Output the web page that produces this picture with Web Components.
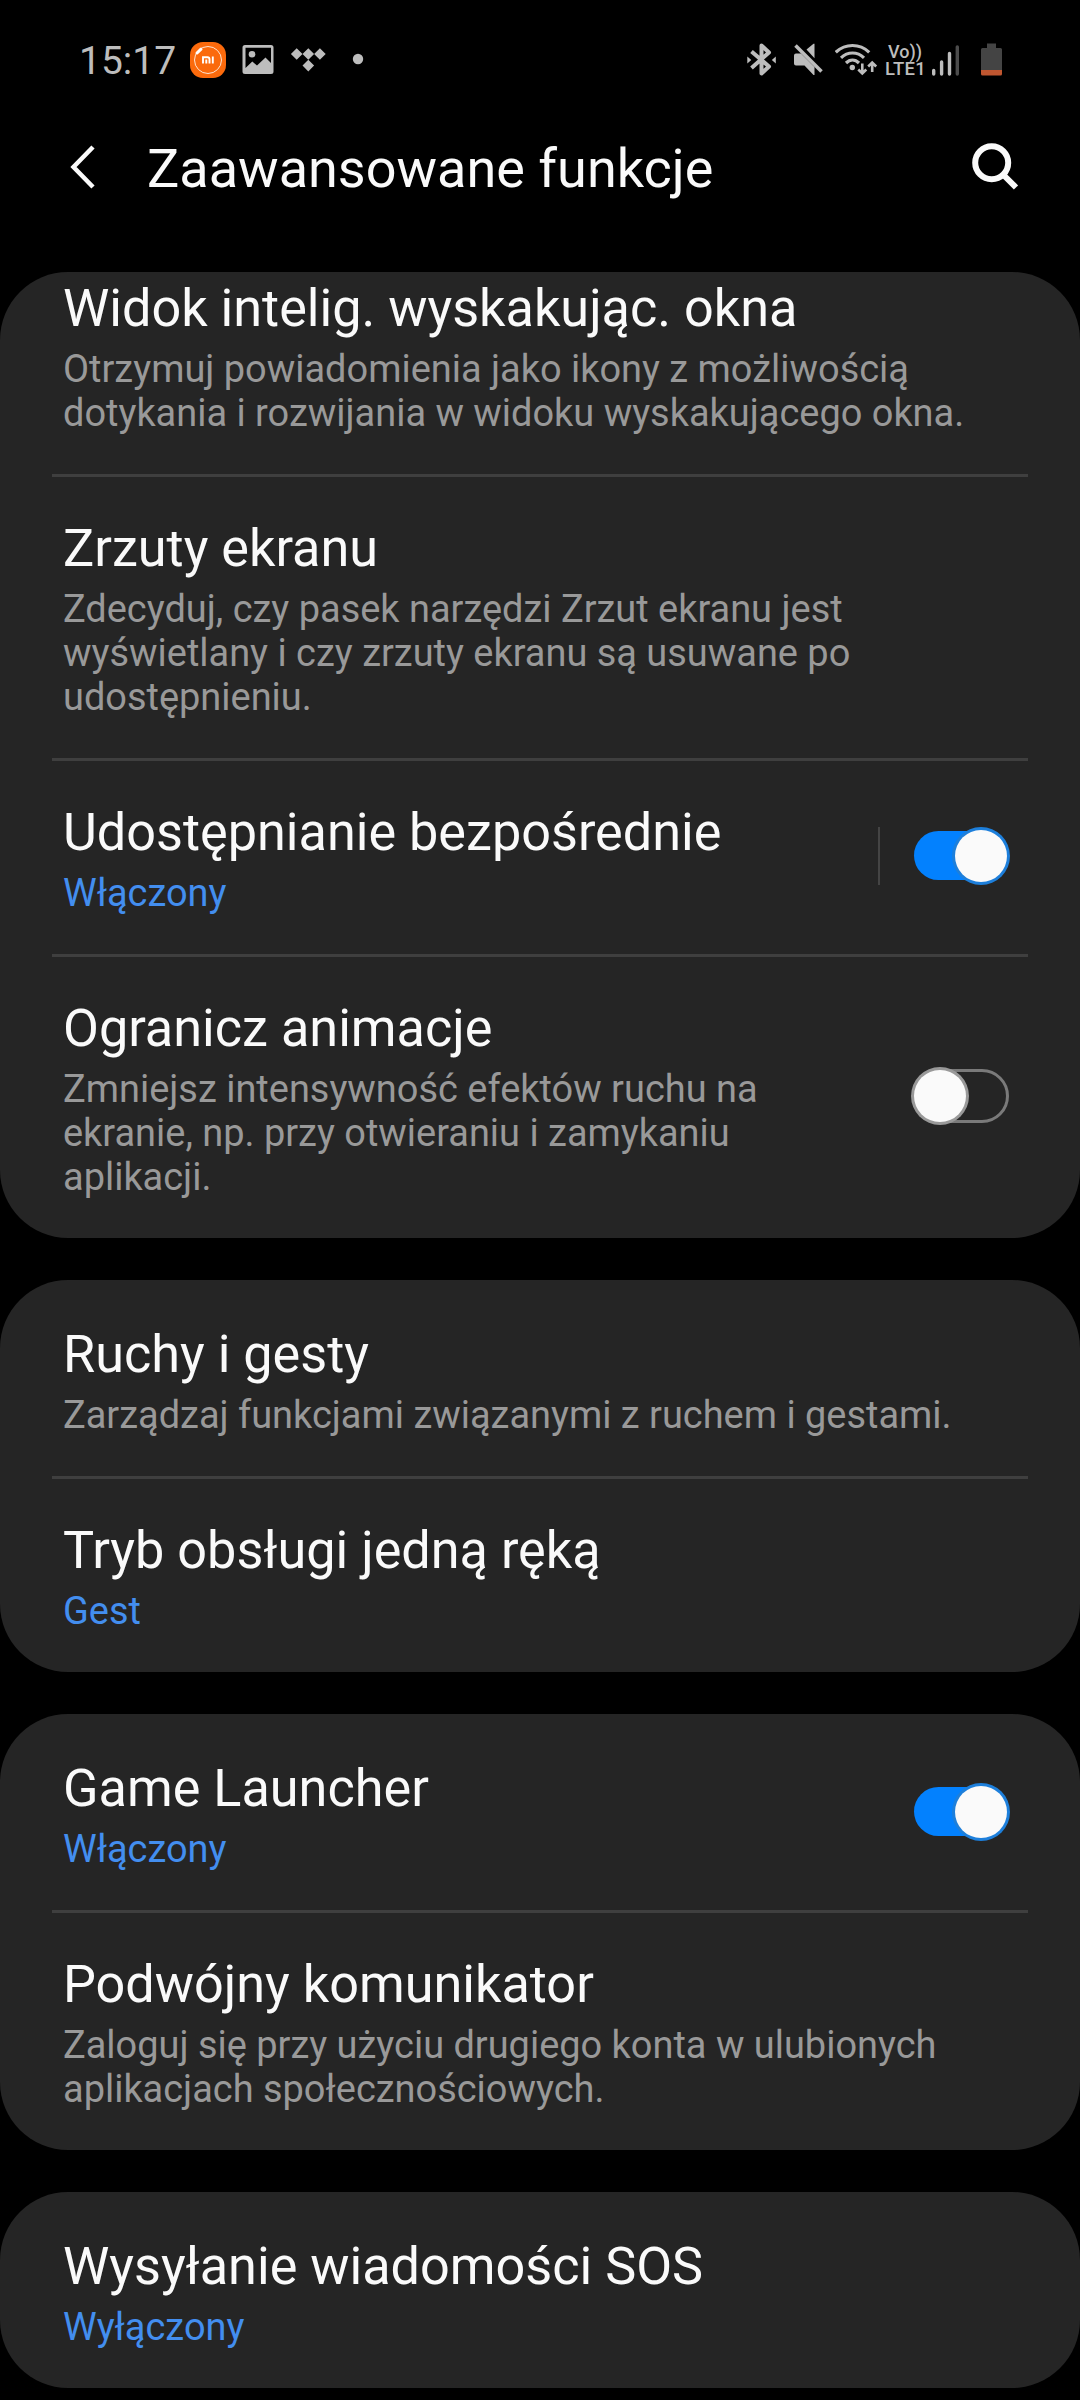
<!DOCTYPE html>
<html lang="pl">
<head>
<meta charset="utf-8">
<title>Zaawansowane funkcje</title>
<style>
    body {
        margin: 0;
        width: 1080px;
        height: 2400px;
        overflow: hidden;
        background: #000;
        color: #fafafa;
        font-family: Roboto, "Noto Sans", sans-serif;
    }
</style>
</head>
<body>

<template id="statusBarTemplate">
    <style>
        :host {
            display: flex;
            justify-content: space-between;
            box-sizing: border-box;
            height: 120px;
            padding: 40px 78px 0 79px;
            color: #bdbdbd;
        }
        .side {
            display: flex;
            height: 40px;
        }
        .time {
            width: 111px;
            font-size: 39px;
            line-height: 43px;
            white-space: nowrap;
        }
        .volte {
            display: flex;
            flex-direction: column;
            width: 47px;
            font-weight: 500;
            white-space: nowrap;
        }
        .vo {
            height: 20px;
            padding: 1px 0 0 3px;
            box-sizing: border-box;
            font-size: 18px;
            line-height: 22px;
        }
        .lte {
            font-size: 18.5px;
            line-height: 18px;
            letter-spacing: 0.3px;
        }
    </style>
    <div class="side">
        <div class="time">15:17</div>
        <ui-icon name="mi"></ui-icon>
        <ui-icon name="image"></ui-icon>
        <ui-icon name="tidal"></ui-icon>
        <ui-icon name="dot"></ui-icon>
    </div>
    <div class="side">
        <ui-icon name="bluetooth"></ui-icon>
        <ui-icon name="mute"></ui-icon>
        <ui-icon name="wifi"></ui-icon>
        <div class="volte"><span class="vo">Vo))</span><span class="lte">LTE1</span></div>
        <ui-icon name="signal"></ui-icon>
        <ui-icon name="battery"></ui-icon>
    </div>
</template>

<template id="appBarTemplate">
    <style>
        :host {
            display: flex;
            align-items: flex-start;
            box-sizing: border-box;
            height: 152px;
            padding: 20px 60px 0 67px;
        }
        .title {
            flex: 1;
            padding-left: 46px;
            font-size: 54px;
            line-height: 64px;
            margin-top: -3px;
            white-space: nowrap;
        }
    </style>
    <ui-icon name="back"></ui-icon>
    <div class="title"><slot></slot></div>
    <ui-icon name="search"></ui-icon>
</template>

<template id="settingsListTemplate">
    <style>
        :host {
            display: flex;
            flex-direction: column;
            gap: 42px;
            height: 2128px;
            overflow: hidden;
            border-radius: 68px 68px 0 0;
        }
        /* the list is scrolled a little way under the app bar */
        ::slotted(:first-child) {
            margin-top: -38px;
        }
    </style>
    <slot></slot>
</template>

<template id="settingsCardTemplate">
    <style>
        :host {
            display: block;
            flex: none;
            border-radius: 68px;
            background: #252525;
        }
    </style>
    <slot></slot>
</template>

<template id="settingsRowTemplate">
    <style>
        :host {
            display: block;
        }
        .divider {
            height: 3px;
            margin: 0 52px;
            background: #3f3f3f;
        }
        :host(:first-child) .divider {
            background: none;
        }
        .row {
            display: flex;
            justify-content: space-between;
            align-items: center;
            padding: 0 70px 0 63px;
        }
        .text {
            padding: 41px 0 39px;
            white-space: nowrap;
        }
        .title {
            font-size: 52.2px;
            line-height: 61px;
        }
        .summary {
            margin-top: 8px;
            font-size: 37.95px;
            line-height: 44px;
            color: #999;
        }
        :host([accent]) .summary {
            color: #438eef;
        }
        .control {
            margin-top: -3px;
        }
    </style>
    <div class="divider"></div>
    <div class="row">
        <div class="text">
            <div class="title"><slot name="title"></slot></div>
            <div class="summary"><slot></slot></div>
        </div>
        <div class="control"><slot name="control"></slot></div>
    </div>
</template>

<template id="toggleSwitchTemplate">
    <style>
        :host {
            display: flex;
            align-items: center;
            gap: 31px;
        }
        .separator {
            display: none;
            width: 2px;
            height: 58px;
            background: #444;
        }
        :host([separated]) .separator {
            display: block;
        }
        svg {
            display: block;
        }
        .on, :host([checked]) .off {
            display: none;
        }
        :host([checked]) .on {
            display: inline;
        }
    </style>
    <div class="separator"></div>
    <svg width="99" height="58" viewBox="0 0 99 58">
        <g class="on">
            <rect x="3" y="4" width="94" height="49" rx="24.5" fill="#0381fe"/>
            <circle cx="70" cy="29" r="29" fill="#1d7fdb"/>
            <circle cx="70" cy="29" r="26" fill="#fafafa"/>
        </g>
        <g class="off">
            <rect x="4.5" y="3.5" width="92" height="51" rx="25.5" fill="none" stroke="#7a7a7a" stroke-width="3"/>
            <circle cx="29" cy="29" r="29" fill="#999"/>
            <circle cx="29" cy="29" r="26" fill="#fafafa"/>
        </g>
    </svg>
</template>

<script>
    // every status icon is 40px high, the width includes the room to the next one
    const icons = {
        mi: {
            box: [50, 40],
            body: `<rect x="0" y="2" width="36" height="36" rx="13" fill="#fb6a0c"/>
                <circle cx="18" cy="20" r="13.5" fill="none" stroke="#fde3d0" stroke-width="1"/>
                <path d="M6 13.5L11.5 8" stroke="#fb6a0c" stroke-width="7"/>
                <path d="M7 13L11 9.2" stroke="#fff" stroke-width="3" stroke-linecap="round"/>
                <path d="M13 23.5v-6.2h4.5q2 0 2 2v4.2M16.3 19.5v4M22.8 16.5v7" fill="none" stroke="#fff" stroke-width="1.9"/>`
        },
        image: {
            box: [50, 40],
            body: `<path fill-rule="evenodd" d="M5 5h26q2.5 0 2.5 2.5v24q0 2.5-2.5 2.5H5q-2.5 0-2.5-2.5V7.5Q2.5 5 5 5zM5.5 7.8V28l6.8-6.5 4.7 4 8.5-8 5.5 5.5V7.8z" fill="#bdbdbd"/>
                <circle cx="12" cy="14.3" r="3.3" fill="#bdbdbd"/>`
        },
        tidal: {
            box: [60, 40],
            body: `<path d="M.9 14l5.8-5.8L12.5 14l-5.8 5.8zM12.5 14l5.8-5.8L24.1 14l-5.8 5.8zM24.1 14l5.8-5.8L35.7 14l-5.8 5.8zM12.5 25.6l5.8-5.8 5.8 5.8-5.8 5.8z" fill="#bdbdbd"/>`
        },
        dot: {
            box: [20, 40],
            body: `<circle cx="8" cy="19" r="5.2" fill="#bdbdbd"/>`
        },
        bluetooth: {
            box: [46, 40],
            body: `<path d="M4.5 11.5L22 26.5 14.5 33.5V5.5L22 12.5 4.5 28" fill="none" stroke="#bdbdbd" stroke-width="4" stroke-linejoin="round"/>
                <path d="M.3 16.5L4.3 20 .3 23.5zM28.8 16.5L24.8 20l4 3.5z" fill="#bdbdbd"/>`
        },
        mute: {
            box: [42, 40],
            body: `<path d="M1 15.5q0-2 2-2h5L21.5 27v8h-1l-9-9.5H3q-2 0-2-2zM13.5 9.5L20.5 3.8h1V18.3z" fill="#bdbdbd"/>
                <path d="M2.5 5.5L28.5 31.5" stroke="#bdbdbd" stroke-width="3.6"/>`
        },
        wifi: {
            box: [50, 40],
            body: `<path d="M.8 12.3Q8 5.5 17.5 5.5T34.2 12.3M6 17.8Q11 13 17.5 13T29 17.8M11 23Q14 20 17.5 20T24 23" fill="none" stroke="#bdbdbd" stroke-width="3.2"/>
                <circle cx="17.3" cy="27.5" r="2.7" fill="#bdbdbd"/>
                <path d="M27.3 23.5V34M23.3 29.5l4 4 4-4M37.2 32V22.5M33.2 26.5l4-4 4 4" fill="none" stroke="#bdbdbd" stroke-width="2.6"/>`
        },
        signal: {
            box: [49, 40],
            body: `<path d="M1.7 30.5V34M9.6 22V34M17.5 13.5V34" stroke="#bdbdbd" stroke-width="3.4" stroke-linecap="round"/>
                <path d="M25.3 7V34" stroke="#4c4c4c" stroke-width="3.4" stroke-linecap="round"/>`
        },
        battery: {
            box: [21, 40],
            body: `<path d="M6 3.5h9V8h4.5Q21 8 21 9.5V30H0V9.5Q0 8 1.5 8H6z" fill="#444"/>
                <path d="M0 30h21v4q0 1.5-1.5 1.5h-18Q0 35.5 0 34z" fill="#bf5630"/>`
        },
        back: {
            box: [34, 54],
            body: `<path d="M26 7L6.5 27 26 47" fill="none" stroke="#fafafa" stroke-width="4.5"/>`
        },
        search: {
            box: [54, 54],
            body: `<circle cx="25.7" cy="22.7" r="16.5" fill="none" stroke="#fafafa" stroke-width="6"/>
                <path d="M37 34.5L50 47.5" stroke="#fafafa" stroke-width="6"/>`
        }
    };

    class UiIcon extends HTMLElement {
        constructor() {
            super();
            this.attachShadow({ mode: 'open' });
        }

        connectedCallback() {
            const icon = icons[this.getAttribute('name')];
            const [width, height] = icon.box;
            this.shadowRoot.innerHTML = `
                <style>
                    :host { display: block; flex: none; }
                    svg { display: block; }
                </style>
                <svg width="${width}" height="${height}" viewBox="0 0 ${width} ${height}">${icon.body}</svg>`;
        }
    }

    customElements.define('ui-icon', UiIcon);

    // the other elements only stamp their template
    function defineFromTemplate(name, templateId) {
        customElements.define(name, class extends HTMLElement {
            constructor() {
                super();
                const template = document.getElementById(templateId).content;
                this.attachShadow({ mode: 'open' }).appendChild(template.cloneNode(true));
            }
        });
    }

    defineFromTemplate('status-bar', 'statusBarTemplate');
    defineFromTemplate('app-bar', 'appBarTemplate');
    defineFromTemplate('settings-list', 'settingsListTemplate');
    defineFromTemplate('settings-card', 'settingsCardTemplate');
    defineFromTemplate('settings-row', 'settingsRowTemplate');
    defineFromTemplate('toggle-switch', 'toggleSwitchTemplate');
</script>

<status-bar></status-bar>
<app-bar>Zaawansowane funkcje</app-bar>

<settings-list>
    <settings-card>
        <settings-row>
            <span slot="title">Widok intelig. wyskakując. okna</span>
            Otrzymuj powiadomienia jako ikony z możliwością<br>dotykania i rozwijania w widoku wyskakującego okna.
        </settings-row>
        <settings-row>
            <span slot="title">Zrzuty ekranu</span>
            Zdecyduj, czy pasek narzędzi Zrzut ekranu jest<br>wyświetlany i czy zrzuty ekranu są usuwane po<br>udostępnieniu.
        </settings-row>
        <settings-row accent>
            <span slot="title">Udostępnianie bezpośrednie</span>
            Włączony
            <toggle-switch slot="control" checked separated></toggle-switch>
        </settings-row>
        <settings-row>
            <span slot="title">Ogranicz animacje</span>
            Zmniejsz intensywność efektów ruchu na<br>ekranie, np. przy otwieraniu i zamykaniu<br>aplikacji.
            <toggle-switch slot="control"></toggle-switch>
        </settings-row>
    </settings-card>

    <settings-card>
        <settings-row>
            <span slot="title">Ruchy i gesty</span>
            Zarządzaj funkcjami związanymi z ruchem i gestami.
        </settings-row>
        <settings-row accent>
            <span slot="title">Tryb obsługi jedną ręką</span>
            Gest
        </settings-row>
    </settings-card>

    <settings-card>
        <settings-row accent>
            <span slot="title">Game Launcher</span>
            Włączony
            <toggle-switch slot="control" checked></toggle-switch>
        </settings-row>
        <settings-row>
            <span slot="title">Podwójny komunikator</span>
            Zaloguj się przy użyciu drugiego konta w ulubionych<br>aplikacjach społecznościowych.
        </settings-row>
    </settings-card>

    <settings-card>
        <settings-row accent>
            <span slot="title">Wysyłanie wiadomości SOS</span>
            Wyłączony
        </settings-row>
    </settings-card>
</settings-list>

</body>
</html>
